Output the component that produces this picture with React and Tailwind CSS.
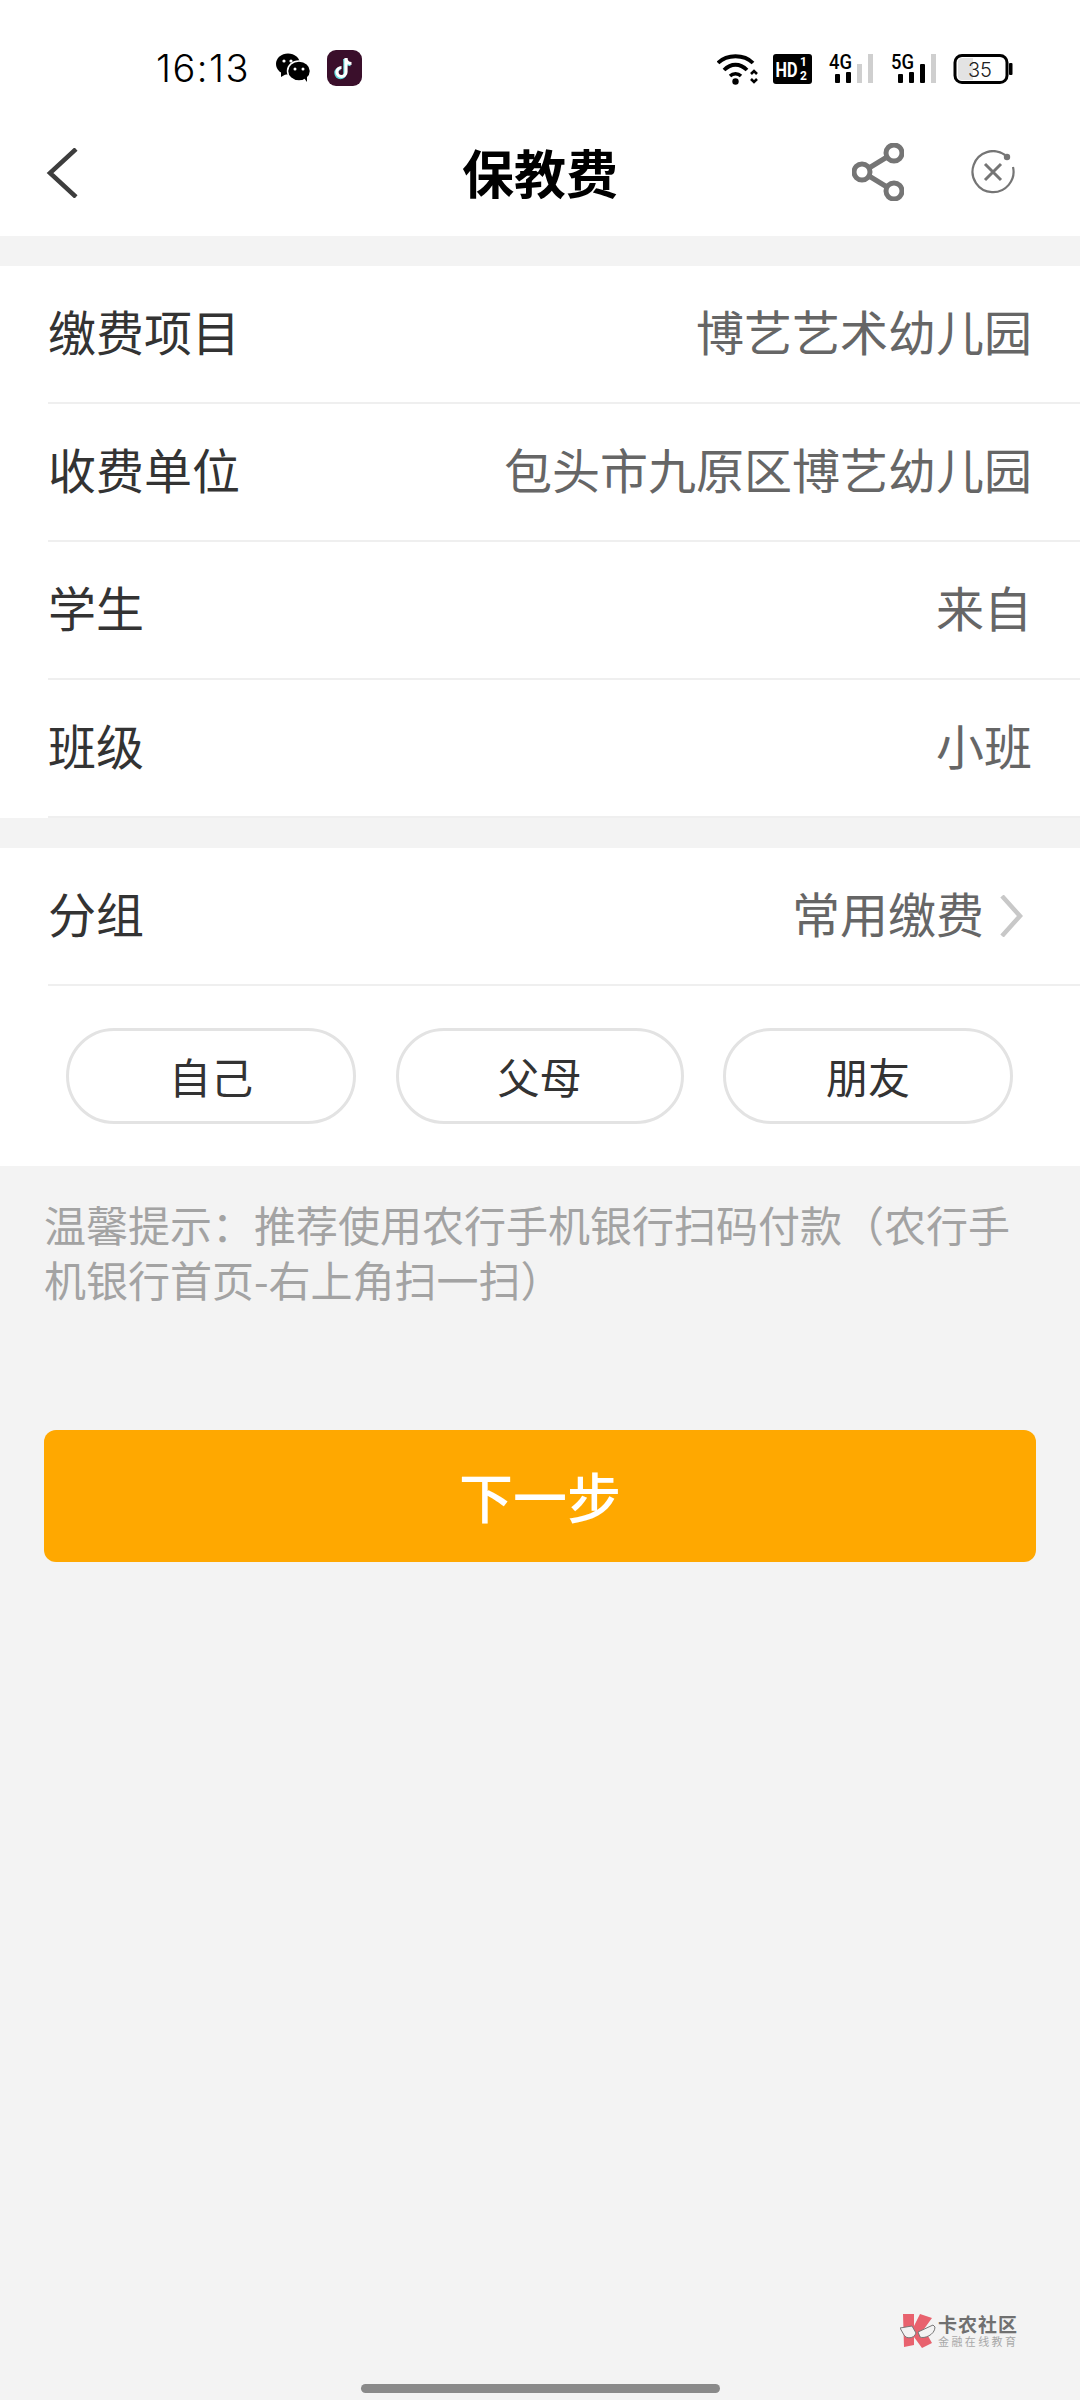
import React from 'react';

const cjk = { fontFamily: '"Noto Sans CJK SC", "Noto Sans", sans-serif' };

function Row({ label, value, chevron }) {
  return (
    <div className="ml-12 h-[138px] flex items-center justify-between border-b-2 border-[#efefef] pb-[8px] pr-[48px]">
      <span className="text-[48px] leading-none text-[#333333]">{label}</span>
      <div className="flex items-center">
        <span className="text-[48px] leading-none text-[#666666]">{value}</span>
        {chevron && (
          <svg width="24" height="42" viewBox="0 0 24 42" className="ml-[15px] mr-[9px] mt-[8px]">
            <path d="M3 1 L21 21 L3 41" fill="none" stroke="#c8c8c8" strokeWidth="4.5" />
          </svg>
        )}
      </div>
    </div>
  );
}

function Chip({ children, className }) {
  return (
    <div className={`h-[96px] rounded-full border-[3px] border-[#e3e3e3] flex items-center justify-center text-[42px] leading-none text-[#333333] ${className}`}>
      {children}
    </div>
  );
}

function StatusBar() {
  return (
    <div className="h-[68px] mt-[34px] flex items-center justify-between pl-[156px] pr-[67px] shrink-0">
      <div className="flex items-center">
        <span className="w-[90px] text-[38px] font-light leading-none text-black tracking-[1.5px] whitespace-nowrap" style={{ fontFamily: 'Inter, sans-serif' }}>16:13</span>
        {/* wechat */}
        <svg width="34" height="30" viewBox="0 0 34 30" className="ml-[30px]">
          <ellipse cx="12" cy="11" rx="12" ry="10.5" fill="#000" />
          <path d="M5 18 L5 24 L12 20Z" fill="#000" />
          <ellipse cx="23" cy="18" rx="11.5" ry="10" fill="#000" stroke="#fff" strokeWidth="1.5" />
          <path d="M28 25 L31 29 L31 22Z" fill="#000" />
          <circle cx="8" cy="8" r="1.6" fill="#fff" />
          <circle cx="15" cy="8" r="1.6" fill="#fff" />
          <circle cx="19" cy="16" r="1.5" fill="#fff" />
          <circle cx="27" cy="16" r="1.5" fill="#fff" />
        </svg>
        {/* tiktok */}
        <div className="ml-[17px] w-[35px] h-[36px] rounded-[9px] bg-[#3a0f2b] flex items-center justify-center">
          <svg width="24" height="26" viewBox="0 0 24 26" fill="none">
            <path d="M13 3 V17 a4.5 4.5 0 1 1 -4.5 -4.5" stroke="#5fdde0" strokeWidth="3.4" transform="translate(-1 1)" />
            <path d="M13 3 c0 3 2 5.5 5.5 5.5" stroke="#5fdde0" strokeWidth="3.4" transform="translate(-1 1)" />
            <path d="M13 3 V17 a4.5 4.5 0 1 1 -4.5 -4.5 M13 3 c0 3 2 5.5 5.5 5.5" stroke="#ffffff" strokeWidth="3.2" />
          </svg>
        </div>
      </div>
      <svg width="296" height="44" viewBox="0 -7 296 44" className="mt-[1px]">
        {/* wifi */}
        <path d="M1 9 C10 0 27 0 36 9" fill="none" stroke="#000" strokeWidth="3.8" />
        <path d="M7 16 C14 9 23 9 30 16" fill="none" stroke="#000" strokeWidth="3.8" />
        <path d="M13 22 C16 19 21 19 24 22" fill="none" stroke="#000" strokeWidth="3.4" />
        <circle cx="18.5" cy="27.5" r="3.2" fill="#000" />
        <path d="M34 20 L37 17 L40 20 M34 25 L37 28 L40 25" fill="none" stroke="#000" strokeWidth="2.6" />
        {/* hd */}
        <rect x="56" y="0" width="39" height="30" rx="3" fill="#000" />
        <text x="58.5" y="23" fontSize="21" fontWeight="700" fontFamily="Roboto, sans-serif" fill="#fff" textLength="22" lengthAdjust="spacingAndGlyphs">HD</text>
        <text x="83" y="12" fontSize="12" fontWeight="700" fontFamily="Roboto, sans-serif" fill="#fff">1</text>
        <text x="83" y="26" fontSize="12" fontWeight="700" fontFamily="Roboto, sans-serif" fill="#fff">2</text>
        {/* signal 4g */}
        <rect x="118" y="20" width="5" height="9" rx="1" fill="#000" />
        <rect x="129" y="18" width="5" height="11" rx="1" fill="#000" />
        <rect x="140" y="10" width="5" height="19" fill="#cfcfcf" />
        <rect x="151" y="0" width="5" height="29" fill="#cfcfcf" />
        <text x="112" y="15" fontSize="20" fontWeight="500" fontFamily="Roboto, sans-serif" fill="#000" textLength="23" lengthAdjust="spacingAndGlyphs">4G</text>
        {/* signal 5g */}
        <rect x="181" y="20" width="5" height="9" rx="1" fill="#000" />
        <rect x="192" y="18" width="5" height="11" rx="1" fill="#000" />
        <rect x="203" y="10" width="5" height="19" rx="1" fill="#000" />
        <rect x="214" y="0" width="5" height="29" fill="#cfcfcf" />
        <text x="174" y="15" fontSize="20" fontWeight="500" fontFamily="Roboto, sans-serif" fill="#000" textLength="23" lengthAdjust="spacingAndGlyphs">5G</text>
        {/* battery */}
        <rect x="238" y="1.5" width="52" height="27" rx="7" fill="#fff" stroke="#000" strokeWidth="3" />
        <path d="M241 8 a4 4 0 0 1 4-4 H256 V26 H245 a4 4 0 0 1-4-4Z" fill="#e3e3e3" />
        <rect x="292" y="9" width="3.5" height="12" rx="1" fill="#000" />
        <text x="263" y="23" textAnchor="middle" fontSize="20" fontWeight="300" fontFamily="Inter, sans-serif" fill="#222">35</text>
      </svg>
    </div>
  );
}

function NavBar() {
  return (
    <div className="relative flex-1 flex items-center justify-between pl-[46px] pr-[65px] pt-[5px]">
      <svg width="32" height="50" viewBox="0 0 32 50" className="mt-[2px]">
        <path d="M30 1 L4 25 L30 49" fill="none" stroke="#3d3d3d" strokeWidth="4.5" />
      </svg>
      <h1 className="absolute left-0 right-0 text-center text-[52px] leading-none font-bold text-black">保教费</h1>
      <div className="flex items-center">
        <svg width="52" height="58" viewBox="0 0 52 58" fill="none" stroke="#757575" strokeWidth="5">
          <circle cx="42" cy="10" r="8" />
          <circle cx="10" cy="29" r="8" />
          <circle cx="42" cy="48" r="8" />
          <path d="M17 25 L35 14 M17 33 L35 44" />
        </svg>
        <svg width="44" height="44" viewBox="0 0 44 44" fill="none" stroke="#757575" className="ml-[67px]">
          <path d="M34 5 A20.5 20.5 0 1 0 42 17" strokeWidth="2.2" />
          <path d="M14 14 L30 30 M30 14 L14 30" strokeWidth="3" />
          <circle cx="36" cy="7" r="3.2" fill="#757575" stroke="none" />
        </svg>
      </div>
    </div>
  );
}

export default function App() {
  return (
    <div className="w-[1080px] h-[2400px] bg-[#f3f3f3] flex flex-col relative overflow-hidden" style={cjk}>
      <div className="h-[236px] bg-white flex flex-col shrink-0">
        <StatusBar />
        <NavBar />
      </div>

      <div className="mt-[30px] bg-white">
        <Row label="缴费项目" value="博艺艺术幼儿园" />
        <Row label="收费单位" value="包头市九原区博艺幼儿园" />
        <Row label="学生" value="来自" />
        <Row label="班级" value="小班" />
      </div>

      <div className="mt-[30px] bg-white h-[318px]">
        <Row label="分组" value="常用缴费" chevron />
        <div className="flex pl-[66px] pr-[67px] pt-[42px] justify-between">
          <Chip className="w-[290px]">自己</Chip>
          <Chip className="w-[288px]">父母</Chip>
          <Chip className="w-[290px]">朋友</Chip>
        </div>
      </div>

      <p className="mx-[44px] mt-[30px] text-[42px] leading-[55px] text-[#a3a3a3]">
        温馨提示：推荐使用农行手机银行扫码付款（农行手机银行首页-右上角扫一扫）
      </p>

      <button className="mx-[44px] mt-[124px] h-[132px] rounded-[12px] bg-[#ffa800] text-white text-[54px] leading-none font-medium" style={cjk}>
        下一步
      </button>

      {/* watermark */}
      <div className="absolute left-[900px] top-[2313px] flex items-center">
        <svg width="36" height="36" viewBox="0 0 36 36">
          <path d="M3 1 H14 V13 L20 1 L32 5 L24 16 L32 30 L22 35 L14 24 V32 L4 34Z" fill="#e8626e" />
          <path d="M0 15 L12 13 L16 20 C14 26 6 26 4 22Z M18 19 L33 12 L35 14 C35 22 24 26 20 24Z" fill="#f3f3f3" stroke="#777" strokeWidth="1" />
        </svg>
        <div className="ml-[2px] flex flex-col">
          <span className="text-[19px] leading-[20px] font-bold text-[#707070] tracking-[1px]">卡农社区</span>
          <span className="text-[11px] leading-[14px] text-[#a8a8a8] tracking-[2.4px]">金融在线教育</span>
        </div>
      </div>

      {/* home bar */}
      <div className="absolute left-[361px] top-[2384px] w-[359px] h-[9px] rounded-full bg-[#8a8a8a]" />
    </div>
  );
}
